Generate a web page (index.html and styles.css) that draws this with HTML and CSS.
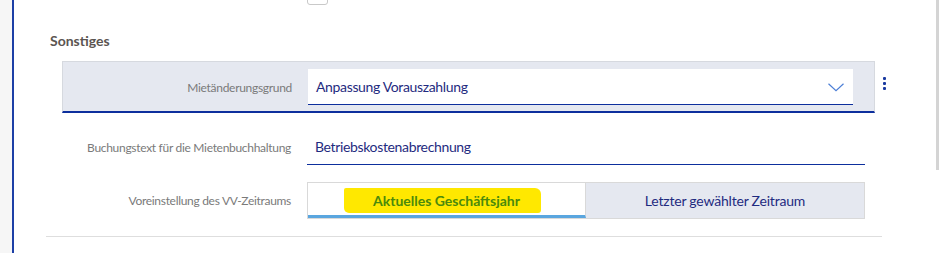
FILE: index.html
```html
<!DOCTYPE html>
<html lang="de">
<head>
<meta charset="utf-8">
<title>Sonstiges</title>
<link rel="stylesheet" href="styles.css">
</head>
<body>
<div class="gutter"></div>
<main class="panel">
  <div class="scroll-thumb"></div>
  <div class="row top-row">
    <div class="label"></div>
    <div class="check-line">
      <span class="checkbox"></span>
      <span class="check-text">Mietänderung zum Stichtag der Abrechnung gegen Vorauszahlung verrechnen</span>
    </div>
  </div>

  <h2 class="heading">Sonstiges</h2>

  <div class="field-line">
    <div class="row boxed">
      <div class="label">Mietänderungsgrund</div>
      <div class="input select">
        <span>Anpassung Vorauszahlung</span>
        <svg class="chevron" width="16" height="9" viewBox="0 0 16 9"><path d="M0.5 0.8 L8 7.8 L15.5 0.8" fill="none" stroke="#4d7fd6" stroke-width="1.2"/></svg>
      </div>
    </div>
    <button class="kebab" aria-label="Mehr">
      <span></span><span></span><span></span>
    </button>
  </div>

  <div class="row plain">
    <div class="label">Buchungstext für die Mietenbuchhaltung</div>
    <div class="input wide"><span>Betriebskostenabrechnung</span></div>
  </div>

  <div class="row plain toggle-row">
    <div class="label">Voreinstellung des VV-Zeitraums</div>
    <div class="toggle">
      <div class="seg active"><span class="marker">Aktuelles Geschäftsjahr</span></div>
      <div class="seg">Letzter gewählter Zeitraum</div>
    </div>
  </div>

  <hr class="sep">
</main>
</body>
</html>
```
FILE: styles.css
```css
html, body {
  margin: 0;
  height: 100%;
  overflow: hidden;
}
body {
  display: flex;
  background: #ffffff;
  font-family: Lato, "Open Sans", sans-serif;
}
.gutter {
  width: 12px;
  flex: none;
  background: #f6f6f6;
}
.panel {
  position: relative;
  flex: 1;
  border-left: 2px solid #1d3fa6;
  background: #fff;
  padding-left: 48px;
}
.scroll-thumb {
  position: absolute;
  right: 0;
  top: 0;
  width: 3px;
  height: 170px;
  background: #d4d4d4;
}
.row {
  display: flex;
  align-items: center;
}
.label {
  width: 229px;
  flex: none;
  margin-right: 16px;
  text-align: right;
  font-size: 12px;
  letter-spacing: -0.3px;
  color: #7a7a7a;
}
.top-row {
  height: 20px;
  margin-top: -15px;
}
.check-line {
  display: flex;
  align-items: flex-start;
  height: 20px;
}
.checkbox {
  width: 19px;
  height: 18px;
  border: 1px solid #c9c9c9;
  border-radius: 3px;
  flex: none;
}
.check-text {
  margin-left: 12px;
  margin-top: -1px;
  font-size: 14px;
  line-height: 18px;
  letter-spacing: -0.3px;
  color: #1d3fa6;
  white-space: nowrap;
}
.heading {
  margin: 27px 0 0 -12px;
  font-size: 14px;
  line-height: 18px;
  font-weight: 700;
  color: #5b5551;
}
.field-line {
  display: flex;
  align-items: center;
  margin-top: 11px;
}
.boxed {
  width: 790px;
  padding: 7px 21px 6px 0;
  background: #e5e8f0;
  border: 1px solid #d6d9df;
  border-bottom: 2px solid #0d2f9d;
}
.input {
  border-bottom: 1px solid #0d2f9d;
  background: #fff;
  display: flex;
  align-items: center;
  padding-left: 8px;
  font-size: 14px;
  letter-spacing: -0.35px;
  color: #1f2b80;
  box-sizing: border-box;
  height: 36px;
}
.select {
  width: 546px;
  justify-content: space-between;
  padding-right: 9px;
}
.chevron {
  display: block;
  margin-top: 1px;
}
.kebab {
  margin-left: 8px;
  width: 3px;
  padding: 0;
  border: 0;
  background: none;
  display: flex;
  flex-direction: column;
  gap: 2px;
  margin-top: -8px;
}
.kebab span {
  width: 3px;
  height: 3px;
  background: #1a3aa0;
  border-radius: 1px;
}
.wide {
  width: 558px;
}
.field-line + .plain {
  margin-top: 16px;
}
.toggle-row {
  margin-top: 17px;
}
.toggle {
  width: 558px;
  height: 37px;
  box-sizing: border-box;
  border: 1px solid #d9d9d9;
  display: flex;
}
.seg {
  flex: 1;
  display: flex;
  align-items: center;
  justify-content: center;
  font-size: 14px;
  letter-spacing: -0.2px;
  color: #1f2b80;
  background: #e5e8f0;
}
.seg.active {
  background: #fff;
  border-right: 1px solid #d9d9d9;
  border-bottom: 3px solid #5aa6df;
  flex: none;
  width: 278px;
  box-sizing: border-box;
  padding-top: 3px;
}
.marker {
  background: #ffe800;
  color: #4b8a0c;
  font-weight: 700;
  letter-spacing: 0;
  padding: 4px 21px 4px 29px;
  margin-right: 8px;
  border-radius: 2px 6px 3px 5px;
  line-height: 17px;
}
.sep {
  margin: 17px 0 0 -16px;
  width: 836px;
  border: 0;
  border-top: 1px solid #dedede;
  height: 0;
}
```
